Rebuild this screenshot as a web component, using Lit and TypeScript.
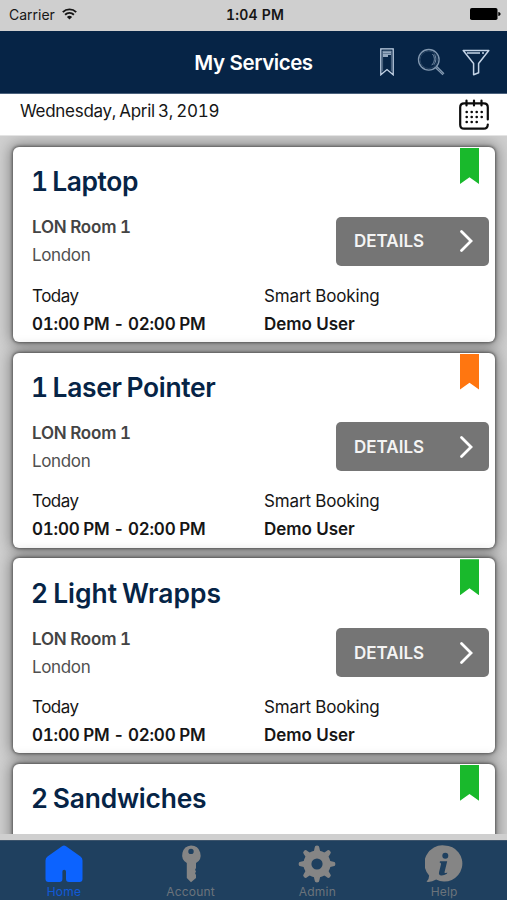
import { LitElement, html, css, svg } from "lit";
import { customElement, property } from "lit/decorators.js";
import { styleMap } from "lit/directives/style-map.js";

interface Service {
  title: string;
  tracking: number;
  flag: "green" | "orange";
}

const services: Service[] = [
  { title: "1 Laptop", tracking: -0.42, flag: "green" },
  { title: "1 Laser Pointer", tracking: -0.3, flag: "orange" },
  { title: "2 Light Wrapps", tracking: 0, flag: "green" },
  { title: "2 Sandwiches", tracking: -0.2, flag: "green" },
];

const teeth = [0, 45, 90, 135, 180, 225, 270, 315];

@customElement("service-card")
export class ServiceCard extends LitElement {
  @property({ attribute: false }) service!: Service;

  static styles = css`
    :host {
      display: block;
      position: relative;
      box-sizing: border-box;
      height: 195px;
      padding: 18.4px 6px 0 19px;
      border-radius: 6px;
      background: #fff;
      box-shadow: 0 0 3px 1px rgba(0, 0, 0, 0.45), 0 0 14px 3px rgba(0, 0, 0, 0.36);
      white-space: nowrap;
    }
    .title {
      margin-left: -1px;
      font-size: 26.4px;
      font-weight: 570;
      line-height: 32px;
      color: #062446;
      word-spacing: -2px;
    }
    .middle {
      display: flex;
      justify-content: space-between;
      align-items: center;
      margin-top: 16px;
      line-height: 28px;
    }
    .room {
      font-weight: 600;
      color: #444;
      letter-spacing: -0.2px;
      word-spacing: -0.7px;
    }
    .city {
      color: #505050;
      letter-spacing: -0.35px;
    }
    .details {
      display: flex;
      align-items: center;
      justify-content: space-between;
      box-sizing: border-box;
      width: 153px;
      height: 49px;
      padding: 0 15.5px 0 18px;
      border: 0;
      border-radius: 5px;
      background: #757575;
      color: #f4f4f4;
      font: 600 17px Inter, sans-serif;
      letter-spacing: 0;
    }
    .bottom {
      display: grid;
      grid-template-columns: 232px 1fr;
      margin-top: 12.4px;
      line-height: 28px;
      color: #161616;
    }
    .plain {
      letter-spacing: -0.15px;
    }
    .today {
      letter-spacing: -0.5px;
    }
    .time {
      font-weight: 600;
      letter-spacing: -0.2px;
      word-spacing: -0.6px;
    }
    .user {
      font-weight: 600;
      letter-spacing: -0.05px;
    }
    .flag {
      position: absolute;
      top: 1px;
      right: 16px;
      width: 19px;
      height: 36px;
      clip-path: polygon(0 0, 100% 0, 100% 100%, 50% 81%, 0 100%);
    }
    .green {
      background: #19b92c;
    }
    .orange {
      background: #ff7610;
    }
  `;

  render() {
    const s = this.service;
    return html`
      <div class="title" style=${styleMap({ letterSpacing: `${s.tracking}px` })}>${s.title}</div>
      <div class="flag ${s.flag}"></div>
      <div class="middle">
        <div>
          <div class="room">LON Room 1</div>
          <div class="city">London</div>
        </div>
        <button class="details">
          <span>DETAILS</span>
          <svg width="16" height="24" viewBox="0 0 16 24" fill="none" stroke="#fff" stroke-width="2.8" stroke-linecap="round">
            <path d="M3.500 2.500 13 12 3.500 21.500" />
          </svg>
        </button>
      </div>
      <div class="bottom">
        <div class="today">Today</div>
        <div class="plain">Smart Booking</div>
        <div class="time">01:00 PM - 02:00 PM</div>
        <div class="user">Demo User</div>
      </div>
    `;
  }
}

@customElement("app-root")
export class AppRoot extends LitElement {
  static styles = css`
    :host {
      display: flex;
      flex-direction: column;
      width: 507px;
      height: 900px;
      overflow: hidden;
      background: #cfcfcf;
      font-family: Inter, "Liberation Sans", sans-serif;
      font-size: 17px;
      font-variant-numeric: tabular-nums;
      color: #161616;
      white-space: nowrap;
    }
    svg {
      display: block;
      flex: none;
    }
    .status {
      display: grid;
      grid-template-columns: 1fr auto 1fr;
      align-items: center;
      height: 31px;
      padding: 0 6px 3px 9px;
      box-sizing: border-box;
      font-size: 14px;
    }
    .carrier {
      display: flex;
      align-items: center;
      gap: 7px;
    }
    .clock {
      font-weight: 600;
      letter-spacing: 0.2px;
    }
    .battery {
      justify-self: end;
    }
    .header {
      display: grid;
      grid-template-columns: 1fr auto 1fr;
      align-items: center;
      height: 63px;
      box-sizing: border-box;
      padding: 0 17px;
      background: #062446;
      border-bottom: 1px solid #4a617c;
      color: #fff;
    }
    .heading {
      grid-column: 2;
      font-size: 20.5px;
      font-weight: 570;
      letter-spacing: -0.45px;
    }
    .tools {
      display: flex;
      justify-content: flex-end;
      align-items: center;
      gap: 17px;
    }
    .tools svg:first-child {
      margin-right: 6px;
    }
    .date {
      display: flex;
      justify-content: space-between;
      height: 42px;
      box-sizing: border-box;
      padding: 5px 17px 0 20px;
      background: #fff;
      border-bottom: 1px solid #e4e4e4;
    }
    .day {
      line-height: 24px;
      letter-spacing: -0.29px;
      word-spacing: -1.1px;
    }
    .list {
      height: 698px;
      box-sizing: border-box;
      padding: 11px 12px 0 13px;
      overflow-x: hidden;
      overflow-y: auto;
      scrollbar-width: none;
      display: flex;
      flex-direction: column;
      gap: 10.6px;
    }
    service-card {
      flex: none;
    }
    .tabs {
      display: grid;
      grid-template-columns: repeat(4, 1fr);
      height: 60px;
      margin-top: 6px;
      background: #1f405f;
      border-top: 1px solid #3b536b;
      box-sizing: border-box;
      color: #858585;
      font-size: 12px;
    }
    .tab {
      display: flex;
      flex-direction: column;
      align-items: center;
      padding: 4px 0 0 1px;
      line-height: 16px;
      letter-spacing: 0.2px;
    }
    .tab svg {
      margin-bottom: 1px;
    }
    .active {
      color: #0c63ff;
    }
    .label {
      opacity: 0.75;
    }
  `;

  render() {
    return html`
      <div class="status">
        <div class="carrier">
          <span>Carrier</span>
          <svg width="15" height="12" viewBox="0 0 15 12" fill="none" stroke="#161616" stroke-width="1.9">
            <path d="M.8 4.1a9.5 9.5 0 0 1 13.4 0M3.1 6.7a6.3 6.3 0 0 1 8.8 0" />
            <path d="M7.5 11.6 4.9 9a3.7 3.7 0 0 1 5.2 0z" fill="#161616" stroke="none" />
          </svg>
        </div>
        <div class="clock">1:04 PM</div>
        <svg class="battery" width="31" height="12" viewBox="0 0 31 12">
          <rect width="27.5" height="12" rx="1.8" />
          <path d="M28.3 4c3 .2 3 3.8 0 4z" />
        </svg>
      </div>

      <div class="header">
        <div class="heading">My Services</div>
        <div class="tools">
          <svg width="14" height="28" viewBox="0 0 14 28" fill="none" stroke="#c3d3e6" stroke-width="1.3">
            <path d="M.8.8h12.4v26L7 21.500.8 26.800z" />
            <path d="M2.600 3h8.800v20.300M2.600 3v20.300" stroke="#71869f" stroke-width=".7" />
            <path d="M3 4.200h8M3 6.200h8M3 8h5" />
          </svg>
          <svg width="28" height="28" viewBox="0 0 28 28" fill="none" stroke="#8298b0" stroke-width="1.300">
            <circle cx="11.800" cy="11.800" r="10.300" />
            <circle cx="11.800" cy="11.800" r="8.700" stroke="#3d5874" stroke-width=".6" />
            <path d="M15.500 6c2.800 3.500 2.400 8-.8 11.200M17.500 6.500c2 3.500 1.600 7-.6 10.200" stroke-width=".9" />
            <path d="m18.600 19.700 7.400 7.200M19.800 18.500l7.200 7.300" />
          </svg>
          <svg width="28" height="28" viewBox="0 0 28 28" fill="none" stroke="#c3d3e6" stroke-width="1.500" stroke-linejoin="round">
            <path d="M1.200 2.500h25.600L16.600 15.500v9.300l-5 2V15.500z" />
            <path d="M5 4.900h13M20 4.900h2" />
          </svg>
        </div>
      </div>

      <div class="date">
        <div class="day">Wednesday, April 3, 2019</div>
        <svg width="32" height="32" viewBox="0 0 32 32" fill="none" stroke="#0c0c0c" stroke-width="2.200" stroke-linecap="round">
          <path d="M29.800 20.500V8.300q0-4-4-4H6.200q-4 0-4 4v17.400q0 4 4 4H25.800q3.800 0 4-4.200" />
          <path d="M8.500 1.500v5M16 1.500v5M23.500 1.500v5" />
          <path d="M8.700 13h.01M13.700 13h.01M18.700 13h.01M23.700 13h.01M8.700 18h.01M13.700 18h.01M18.700 18h.01M23.700 18h.01M8.700 23h.01M13.700 23h.01M18.700 23h.01" stroke-width="2.600" />
        </svg>
      </div>

      <div class="list">
        ${services.map((s) => html`<service-card .service=${s}></service-card>`)}
      </div>

      <div class="tabs">
        <div class="tab active">
          <svg width="38" height="38" viewBox="0 0 38 38" fill="currentColor">
            <path d="M17 1.200q2-1.400 4 0l14.500 10.300q2 1.500 2 4V34q0 3-3 3H24q-3 0-3-3v-7.500q0-1.800-1.800-1.800t-1.800 1.800V34q0 3-3 3H3.500q-3 0-3-3V15.500q0-2.500 2-4z" />
          </svg>
          <span class="label">Home</span>
        </div>
        <div class="tab">
          <svg width="38" height="38" viewBox="0 0 38 38" fill="currentColor">
            <path fill-rule="evenodd" d="M19 .5a9.500 9.500 0 0 1 5 17.600V23l-.9 1.700.9 1.800-.9 1.800.9 1.800V33l-5 4.200-4.200-4.200V18.100A9.500 9.500 0 0 1 19 .5zm0 3.200a2.700 2.700 0 1 0 0 5.400 2.700 2.700 0 0 0 0-5.400z" />
          </svg>
          <span class="label">Account</span>
        </div>
        <div class="tab">
          <svg width="38" height="38" viewBox="0 0 38 38" fill="currentColor">
            ${teeth.map((a) => svg`<path transform="rotate(${a} 19 19)" d="M14 8.500q2.700-2.500 2.700-5.900 0-2 2.300-2t2.300 2Q21.300 6 24 8.500z" />`)}
            <circle cx="19" cy="19" r="9.600" fill="none" stroke="currentColor" stroke-width="8" />
          </svg>
          <span class="label">Admin</span>
        </div>
        <div class="tab">
          <svg width="38" height="38" viewBox="0 0 38 38">
            <path fill="currentColor" d="M19.500.5a18 18 0 1 1-8.400 34Q6.500 37.500 1.500 36.800q2.700-2.300 2.600-6.300A18 18 0 0 1 19.500.5z" />
            <g fill="#1f405f">
              <circle cx="20.300" cy="10.800" r="3" />
              <path d="M15 16.200h7.200l-2.700 11q-.3 1.500 2.800.2l-.4 1.400q-3.200 1.900-5.600 1.700-3-.3-2.200-3.500l1.900-7.800q.3-1.600-1.400-1.800z" />
            </g>
          </svg>
          <span class="label">Help</span>
        </div>
      </div>
    `;
  }
}
